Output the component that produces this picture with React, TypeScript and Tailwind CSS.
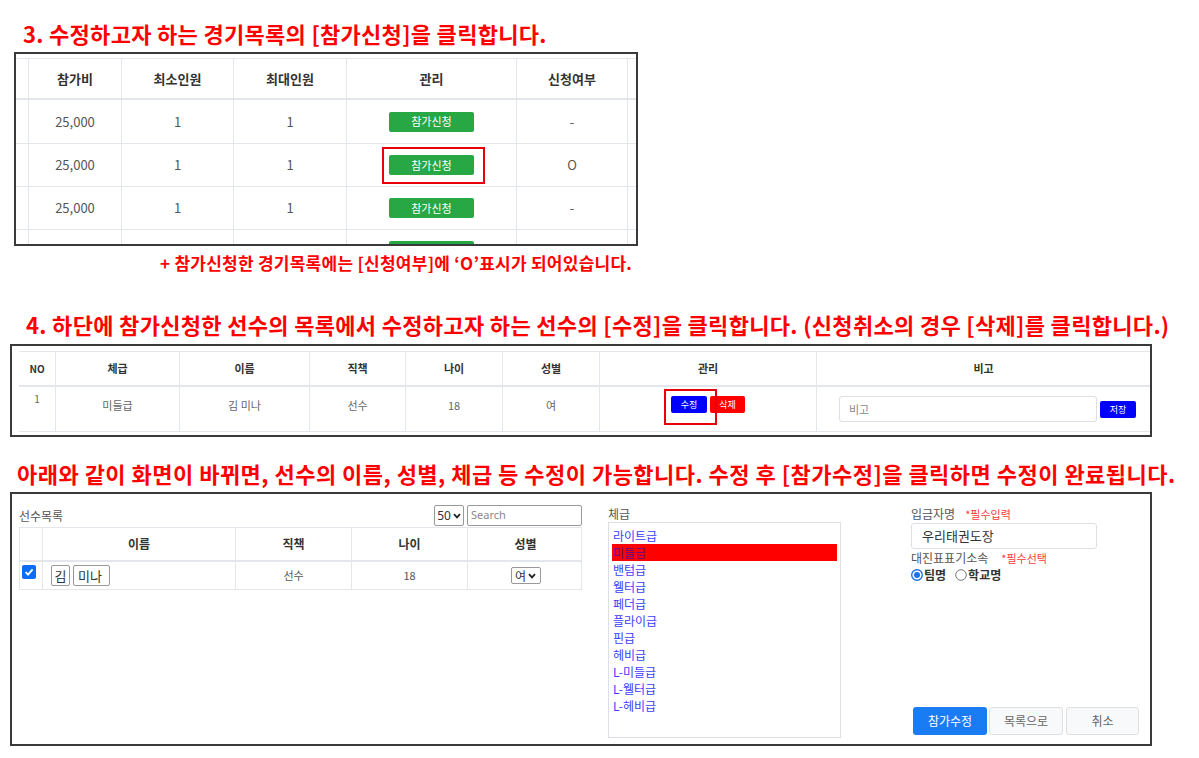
import React from "react";

const kr = "font-['Noto_Sans_CJK_KR','Noto_Sans',sans-serif]";

function Chevron() {
  return (
    <svg width="8" height="6" viewBox="0 0 8 6" className="ml-[2px]">
      <path d="M1 1.2 L4 4.4 L7 1.2" fill="none" stroke="#222" strokeWidth="1.8" />
    </svg>
  );
}

function GreenBtn() {
  return (
    <div className="w-[85px] h-[20px] rounded-[2px] bg-[#28a745] text-white text-[11px] flex items-center justify-center">
      참가신청
    </div>
  );
}

const t1 = "grid grid-cols-[12px_93px_112px_113px_170px_112px]";

function MatchTable() {
  const rows = [
    { st: "-", hl: false },
    { st: "O", hl: true },
    { st: "-", hl: false },
  ];
  const cell = "flex items-center justify-center border-l border-[#e3e6ea]";
  return (
    <div className="ml-[14px] mt-[6px] w-[624px] h-[194px] border-2 border-[#3a3a3a] overflow-hidden pt-[4px]">
      <div className={`${t1} h-[42px] border-t border-b-2 border-[#e3e6ea] text-[13px] font-bold text-[#333]`}>
        <div />
        <div className={cell}>참가비</div>
        <div className={cell}>최소인원</div>
        <div className={cell}>최대인원</div>
        <div className={cell}>관리</div>
        <div className={`${cell} border-r`}>신청여부</div>
      </div>
      {rows.map((r, i) => (
        <div key={i} className={`${t1} ${i === 0 ? "h-[44px]" : "h-[43px]"} border-b border-[#e3e6ea] text-[13px] text-[#555]`}>
          <div />
          <div className={cell}>25,000</div>
          <div className={cell}>1</div>
          <div className={cell}>1</div>
          <div className={cell}>
            <div className="relative">
              <GreenBtn />
              {r.hl && <span className="absolute left-[-7px] right-[-11px] top-[-8px] bottom-[-9px] border-2 border-[#e8000b]" />}
            </div>
          </div>
          <div className={`${cell} border-r`}>{r.st}</div>
        </div>
      ))}
      <div className={`${t1} h-[20px] text-[13px]`}>
        <div />
        <div className="border-l border-[#e3e6ea]" />
        <div className="border-l border-[#e3e6ea]" />
        <div className="border-l border-[#e3e6ea]" />
        <div className="border-l border-[#e3e6ea] flex justify-center items-start pt-[11px]">
          <div className="w-[85px] h-[20px] rounded-[2px] bg-[#28a745]" />
        </div>
        <div className="border-l border-r border-[#e3e6ea]" />
      </div>
    </div>
  );
}

const t2 = "grid grid-cols-[36px_124px_130px_96px_97px_97px_217px_334px]";

function EntryTable() {
  const h = "flex items-center justify-center border-l border-[#e3e6ea]";
  const b = "flex items-center justify-center border-l border-[#e3e6ea] pb-[7px]";
  return (
    <div className="ml-[10px] mt-[6px] w-[1142px] h-[93px] border-2 border-[#3a3a3a] pt-[5px] pl-[7px]">
      <div className={`${t2} h-[36px] border-t border-b-2 border-[#e3e6ea] text-[11px] font-bold text-[#333]`}>
        <div className="flex items-center justify-center text-[10px]">NO</div>
        <div className={h}>체급</div>
        <div className={h}>이름</div>
        <div className={h}>직책</div>
        <div className={h}>나이</div>
        <div className={h}>성별</div>
        <div className={h}>관리</div>
        <div className={h}>비고</div>
      </div>
      <div className={`${t2} h-[45px] border-b border-[#e3e6ea] text-[11px] text-[#666]`}>
        <div className="flex justify-center pt-[4px] text-[10px]">1</div>
        <div className={b}>미들급</div>
        <div className={b}>김 미나</div>
        <div className={b}>선수</div>
        <div className={b}>18</div>
        <div className={b}>여</div>
        <div className="border-l border-[#e3e6ea] flex justify-center items-start pt-[9px]">
          <div className="flex items-start gap-[3px]">
            <div className="relative">
              <div className="w-[36px] h-[17px] bg-[#0000ff] rounded-[2px] text-white text-[9px] flex items-center justify-center">수정</div>
              <span className="absolute left-[-7px] right-[-10px] top-[-7px] bottom-[-12px] border-2 border-[#e8000b] z-10" />
            </div>
            <div className="w-[35px] h-[17px] bg-[#ff0000] rounded-[2px] text-white text-[9px] flex items-center justify-center">삭제</div>
          </div>
        </div>
        <div className="border-l border-[#e3e6ea] flex items-start pl-[22px] pt-[9px]">
          <div className="w-[258px] h-[26px] border border-[#dcdfe4] rounded-[3px] flex items-center pl-[9px] text-[11px] text-[#888]">
            비고
          </div>
          <div className="ml-[3px] mt-[5px] w-[36px] h-[17px] bg-[#0000ff] rounded-[2px] text-white text-[9px] flex items-center justify-center">저장</div>
        </div>
      </div>
    </div>
  );
}

const t3 = "grid grid-cols-[22px_193px_116px_116px_116px]";

function Radio({ on }: { on: boolean }) {
  return (
    <svg width="12" height="12" viewBox="0 0 12 12">
      {on ? (
        <>
          <circle cx="6" cy="6" r="5.3" fill="#fff" stroke="#1a73e8" strokeWidth="1.4" />
          <circle cx="6" cy="6" r="3" fill="#1a73e8" />
        </>
      ) : (
        <circle cx="6" cy="6" r="5.3" fill="#fff" stroke="#777" strokeWidth="1" />
      )}
    </svg>
  );
}

function EditPanel() {
  const classes = ["라이트급", "미들급", "밴텀급", "웰터급", "페더급", "플라이급", "핀급", "헤비급", "L-미들급", "L-웰터급", "L-헤비급"];
  const h = "flex items-center justify-center border-l border-[#e3e6ea]";
  return (
    <div className="ml-[10px] mt-[6px] w-[1142px] h-[254px] border-2 border-[#3a3a3a] flex pl-[7px]">
      {/* player list */}
      <div className="w-[563px] pt-[11px]">
        <div className="h-[22px] flex items-start justify-between">
          <div className="text-[12px] text-[#555] leading-[21px]">선수목록</div>
          <div className="flex gap-[3px]">
            <div className="w-[30px] h-[21px] border border-[#999] rounded-[2px] flex items-center justify-center text-[12px] text-[#333] font-['Noto_Sans',sans-serif]">
              50<Chevron />
            </div>
            <div className="w-[115px] h-[21px] border border-[#999] rounded-[2px] flex items-center pl-[3px] text-[11px] text-[#888] font-['Noto_Sans',sans-serif]">
              Search
            </div>
          </div>
        </div>
        <div className={`${t3} h-[35px] border border-b-2 border-[#e3e6ea] text-[12px] font-bold text-[#333]`}>
          <div />
          <div className={h}>이름</div>
          <div className={h}>직책</div>
          <div className={h}>나이</div>
          <div className={h}>성별</div>
        </div>
        <div className={`${t3} h-[28px] border border-t-0 border-[#e3e6ea] text-[11px] text-[#555]`}>
          <div className="pl-[2px] pt-[3px]">
            <div className="w-[14px] h-[14px] rounded-[2px] bg-[#0b6cf5] flex items-center justify-center">
              <svg width="10" height="10" viewBox="0 0 10 10">
                <path d="M1.6 5.2 L4 7.6 L8.6 2.4" fill="none" stroke="#fff" strokeWidth="1.9" />
              </svg>
            </div>
          </div>
          <div className="border-l border-[#e3e6ea] flex items-start pl-[8px] pt-[3px] gap-[3px] text-[13px] text-[#333]">
            <div className="w-[19px] h-[21px] border border-[#999] rounded-[2px] flex items-center justify-center">김</div>
            <div className="w-[37px] h-[21px] border border-[#999] rounded-[2px] flex items-center pl-[4px]">미나</div>
          </div>
          <div className={h}>선수</div>
          <div className={h}>18</div>
          <div className={h}>
            <div className="w-[30px] h-[17px] border border-[#999] rounded-[2px] flex items-center justify-center text-[12px] text-[#333]">
              여<Chevron />
            </div>
          </div>
        </div>
      </div>

      {/* weight class list */}
      <div className="ml-[26px] w-[233px] pt-[12px]">
        <div className="h-[16px] text-[12px] leading-[16px] text-[#555]">체급</div>
        <div className="h-[216px] border border-[#dcdfe6] pt-[4px] px-[3px]">
          {classes.map((c) => (
            <div
              key={c}
              className={`h-[17px] leading-[17px] text-[12px] pl-[1px] ${c === "미들급" ? "bg-[#ff0000] text-[#5b0f8a]" : "text-[#3d3dff]"}`}
            >
              {c}
            </div>
          ))}
        </div>
      </div>

      {/* depositor / affiliation */}
      <div className="ml-[70px] w-[229px] pt-[12px] pb-[9px] flex flex-col">
        <div className="h-[16px] leading-[16px] text-[12px] text-[#555] flex">
          <span>입금자명</span>
          <span className="ml-[10px] text-[11px] text-[#ff3b3b]">*필수입력</span>
        </div>
        <div className="mt-[1px] w-[186px] h-[26px] border border-[#dcdfe6] rounded-[3px] flex items-center pl-[10px] text-[13px] text-[#333]">
          우리태권도장
        </div>
        <div className="h-[18px] leading-[18px] text-[12px] text-[#555] flex">
          <span>대진표표기소속</span>
          <span className="ml-[13px] text-[11px] text-[#ff3b3b]">*필수선택</span>
        </div>
        <div className="h-[16px] flex items-center text-[12px] font-bold text-[#333]">
          <Radio on />
          <span className="ml-[1px]">팀명</span>
          <span className="ml-[9px] flex items-center">
            <Radio on={false} />
          </span>
          <span className="ml-[1px]">학교명</span>
        </div>
        <div className="mt-auto flex pl-[2px]">
          <div className="w-[74px] h-[28px] rounded-[3px] bg-[#1a7cf3] text-white text-[12px] flex items-center justify-center">참가수정</div>
          <div className="ml-[2px] w-[74px] h-[28px] rounded-[3px] bg-[#f8f9fa] border border-[#e0e0e0] text-[#666] text-[12px] flex items-center justify-center">목록으로</div>
          <div className="ml-[3px] w-[73px] h-[28px] rounded-[3px] bg-[#f8f9fa] border border-[#e0e0e0] text-[#666] text-[12px] flex items-center justify-center">취소</div>
        </div>
      </div>
    </div>
  );
}

export default function App() {
  return (
    <div className={`w-[1199px] h-[758px] bg-white overflow-hidden ${kr}`}>
      <div className="pt-[20px] pl-[23px] h-[46px] leading-[26px] text-[22px] tracking-[0.3px] font-bold text-[#ff0000] whitespace-nowrap">
        3. 수정하고자 하는 경기목록의 [참가신청]을 클릭합니다.
      </div>
      <MatchTable />
      <div className="mt-[7px] pl-[160px] h-[20px] leading-[20px] text-[17px] tracking-[0.25px] font-bold text-[#ff0000] whitespace-nowrap">
        + 참가신청한 경기목록에는 [신청여부]에 ‘O’표시가 되어있습니다.
      </div>
      <div className="mt-[38px] pl-[26px] h-[26px] leading-[26px] text-[22px] tracking-[0.32px] font-bold text-[#ff0000] whitespace-nowrap">
        4. 하단에 참가신청한 선수의 목록에서 수정하고자 하는 선수의 [수정]을 클릭합니다. (신청취소의 경우 [삭제]를 클릭합니다.)
      </div>
      <div className="h-[1px]" />
      <EntryTable />
      <div className="mt-[23px] pl-[17px] h-[26px] leading-[26px] text-[22px] tracking-[0.48px] font-bold text-[#ff0000] whitespace-nowrap">
        아래와 같이 화면이 바뀌면, 선수의 이름, 성별, 체급 등 수정이 가능합니다. 수정 후 [참가수정]을 클릭하면 수정이 완료됩니다.
      </div>
      <EditPanel />
    </div>
  );
}
